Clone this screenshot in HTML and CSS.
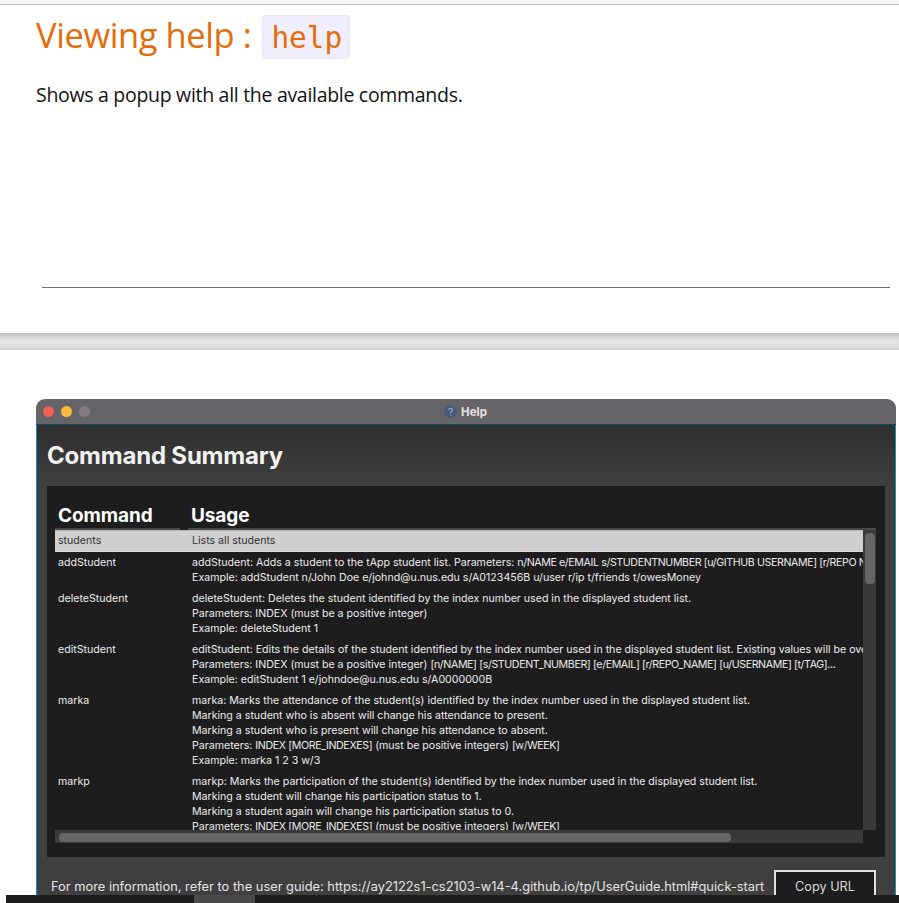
FILE: index.html
```html
<!DOCTYPE html>
<html lang="en">
<head>
<meta charset="utf-8">
<title>Viewing help</title>
<link rel="stylesheet" href="styles.css">
</head>
<body>
<div class="page">
  <div class="topline"></div>
  <section class="doc">
    <h3 class="doc-title"><span class="doc-label">Viewing help :</span> <code class="doc-code">help</code></h3>
    <p class="doc-text">Shows a popup with all the available commands.</p>
    <hr class="doc-rule">
  </section>
  <div class="band"></div>
  <section class="shot">
    <div class="window">
      <div class="titlebar">
        <span class="lights">
          <i class="light red"></i><i class="light yellow"></i><i class="light gray"></i>
        </span>
        <span class="wintitle">
          <svg class="helpicon" viewBox="0 0 12 12" width="13" height="13" aria-hidden="true"><circle cx="6" cy="6" r="6" fill="#46597f"/><path d="M4.4 4.7c0-2.1 3.4-2.1 3.4 0 0 1.3-1.7 1.3-1.7 2.7" fill="none" stroke="#98a6c2" stroke-width="1.1"/><circle cx="6.1" cy="9.2" r=".7" fill="#98a6c2"/></svg>
          Help
        </span>
      </div>
      <div class="winbody">
        <h1 class="summary-title">Command Summary</h1>
        <div class="panel">
          <div class="table">
            <div class="thead">
              <div class="th th-cmd">Command</div>
              <div class="th th-usage">Usage</div>
            </div>
            <div class="tview">
              <div class="rows">
                <div class="row selected"><div class="c1">students</div><div class="c2">Lists all students</div></div>
                <div class="row"><div class="c1">addStudent</div><div class="c2">addStudent: Adds a student to the tApp student list. Parameters: <span class="caps">n/NAME e/EMAIL s/STUDENTNUMBER [u/GITHUB USERNAME] [r/REPO NAME] [t/TAG]...</span><br>Example: addStudent n/John Doe e/johnd@u.nus.edu s/A0123456B u/user r/ip t/friends t/owesMoney</div></div>
                <div class="row"><div class="c1">deleteStudent</div><div class="c2">deleteStudent: Deletes the student identified by the index number used in the displayed student list.<br>Parameters: INDEX (must be a positive integer)<br>Example: deleteStudent 1</div></div>
                <div class="row"><div class="c1">editStudent</div><div class="c2">editStudent: Edits the details of the student identified by the index number used in the displayed student list. Existing values will be overwritten by the input values.<br>Parameters: INDEX (must be a positive integer) <span class="caps">[n/NAME] [s/STUDENT_NUMBER] [e/EMAIL] [r/REPO_NAME] [u/USERNAME] [t/TAG]...</span><br>Example: editStudent 1 e/johndoe@u.nus.edu s/A0000000B</div></div>
                <div class="row"><div class="c1">marka</div><div class="c2">marka: Marks the attendance of the student(s) identified by the index number used in the displayed student list.<br>Marking a student who is absent will change his attendance to present.<br>Marking a student who is present will change his attendance to absent.<br>Parameters: <span class="caps">INDEX [MORE_INDEXES]</span> (must be positive integers) <span class="caps">[w/WEEK]</span><br>Example: marka 1 2 3 w/3</div></div>
                <div class="row"><div class="c1">markp</div><div class="c2">markp: Marks the participation of the student(s) identified by the index number used in the displayed student list.<br>Marking a student will change his participation status to 1.<br>Marking a student again will change his participation status to 0.<br>Parameters: <span class="caps">INDEX [MORE_INDEXES]</span> (must be positive integers) <span class="caps">[w/WEEK]</span><br>Example: markp 1 2 3 w/3</div></div>
              </div>
              <div class="vbar"><div class="vthumb"></div></div>
            </div>
            <div class="hbar"><div class="hthumb"></div></div>
          </div>
        </div>
        <div class="footer">
          <span class="footer-text">For more information, refer to the user guide: https://ay2122s1-cs2103-w14-4.github.io/tp/UserGuide.html#quick-start</span>
          <button class="copy" type="button">Copy URL</button>
        </div>
      </div>
    </div>
  </section>
</div>
<div class="bottombar"><div class="bottomthumb"></div></div>
</body>
</html>
```
FILE: styles.css
```css
* { box-sizing: border-box; }
html, body { margin: 0; padding: 0; height: 903px; overflow: hidden; background: #fff; }
.page { height: 903px; overflow: hidden; }
.topline { height: 5px; background: #f4f4f4; border-bottom: 1px solid #bdbdbd; }
.doc { padding: 10px 9px 0 36px; height: 328px; font-family: "Open Sans", "Noto Sans", sans-serif; }
.doc-title { margin: 0; height: 43px; display: flex; align-items: center; gap: 11px; font-size: 34.5px; font-weight: 400; color: #e46c0a; line-height: 43px; }
.doc-label { letter-spacing: -.42px; padding-bottom: 4px; }
.doc-code { display: inline-block; height: 44px; width: 88px; padding: 0 8px; font-family: "DejaVu Sans Mono", monospace; font-size: 29.5px; line-height: 44px; letter-spacing: -.1px; background: #f0eefc; border: 1px solid #e9e7f5; border-radius: 4px; }
.doc-text { margin: 23px 0 0; font-size: 19.5px; line-height: 27px; color: #111; letter-spacing: -.3px; }
.doc-rule { margin: 179px 0 0 6px; border: 0; height: 1px; background: #6f6f6f; }
.band { height: 17px; background: linear-gradient(#c2c2c2, #e4e4e4 45%, #e0e0e0 75%, #cfcfcf); }
.shot { padding: 49px 3px 0 36px; }
.window { width: 860px; border-radius: 9px 9px 0 0; overflow: hidden; font-family: "Inter", "Lato", sans-serif; color: #fff; }
.titlebar { height: 26px; background: #666468; border-bottom: 1px solid #0e4a5f; display: flex; align-items: center; justify-content: center; position: relative; }
.lights { position: absolute; left: 7px; top: 7px; display: flex; gap: 7px; }
.light { display: block; width: 11px; height: 11px; border-radius: 50%; }
.red { background: #ee6058; }
.yellow { background: #f5bd3f; }
.gray { background: #7f7e82; }
.wintitle { display: flex; align-items: center; gap: 4px; font-size: 11.5px; font-weight: 700; color: #e3e3e3; margin-right: 1px; }
.winbody { height: 480px; padding: 0 10px; background: linear-gradient(#2f2f2f, #3f3f3f 60px); border-left: 1px solid #1192bd; border-right: 1px solid #1192bd; }
.summary-title { margin: 0; padding-top: 16px; height: 61px; font-size: 24px; line-height: 30px; font-weight: 700; color: #f2f2f2; letter-spacing: -.2px; }
.panel { width: 838px; height: 371px; background: #1d1d1d; padding: 15px 9px 0 8px; }
.thead { height: 29px; display: flex; }
.th { height: 29px; font-size: 19px; line-height: 30px; font-weight: 700; border-bottom: 2px solid #4a4a4a; letter-spacing: -.1px; }
.th-cmd { width: 125px; padding-left: 3px; margin-right: 8px; }
.th-usage { flex: 1; padding-left: 3px; }
.tview { height: 300px; position: relative; overflow: hidden; padding-right: 13px; }
.rows { height: 300px; overflow: hidden; }
.row { display: flex; padding: 3px 0 3px 3px; font-size: 10.62px; line-height: 15px; color: #ececec; white-space: nowrap; }
.row.selected { height: 22px; background: #cfcfcf; color: #333; border-top: 1px solid #bbb; border-bottom: 1px solid #e0e0e0; padding: 2px 0 0 3px; }
.c1 { width: 134px; flex: none; }
.c2 { flex: 1; min-width: 0; overflow: hidden; }
.caps { letter-spacing: -.37px; }
.vbar { position: absolute; top: 0; right: 0; width: 13px; height: 300px; background: #3a3a3a; }
.vthumb { width: 10px; height: 51px; margin: 3px 0 0 2px; background: #666; border-radius: 4px; }
.hbar { width: 808px; height: 13px; background: #3a3a3a; padding: 3px 4px; }
.hthumb { width: 672px; height: 9px; background: #666; border-radius: 4px; }
.footer { display: flex; align-items: flex-start; padding: 13px 0 0 4px; }
.footer-text { margin-top: 7px; width: 723px; font-size: 12.85px; line-height: 20px; color: #e4e4e4; white-space: nowrap; }
.copy { width: 102px; height: 36px; padding: 0 0 4px; background: #1d1d1d; border: 2px solid #e0e0e0; border-radius: 0; color: #d8d8d8; font: 12.7px "Inter", sans-serif; }
.bottombar { position: fixed; left: 6px; right: 0; bottom: 0; height: 8px; background: #1d1d1d; }
.bottomthumb { width: 61px; height: 8px; margin-left: 188px; background: #4a4a4a; }
```
